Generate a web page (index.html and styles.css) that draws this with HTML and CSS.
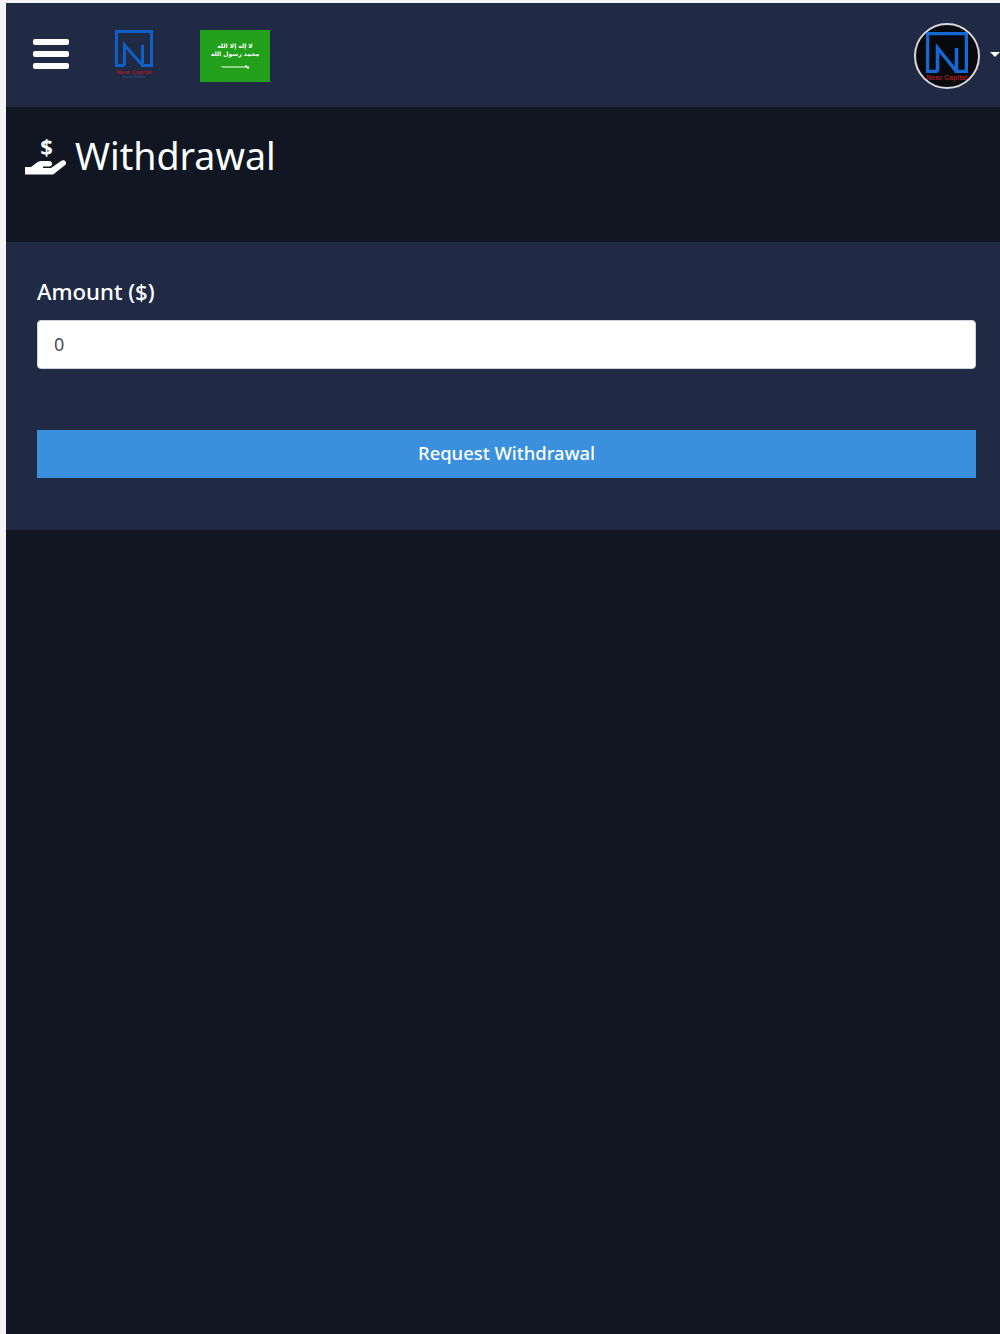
FILE: index.html
```html
<!DOCTYPE html>
<html lang="en">
<head>
<meta charset="utf-8">
<title>Withdrawal</title>
<link rel="stylesheet" href="styles.css">
</head>
<body>
<div class="app">
  <nav class="topbar">
    <button class="menu-btn" aria-label="Menu"><span></span><span></span><span></span></button>
    <div class="logo">
      <svg class="logo-mark" viewBox="0 0 38 37" width="38" height="37"><path d="M9.500 35.500H1.500V1.500H36.500V35.500H27.500V15M27.500 35.500L9.500 15V35.500" fill="none" stroke="#0f5fc6" stroke-width="3"/></svg>
      <div class="logo-text">Near Capital</div>
      <div class="logo-sub">Forex Broker</div>
    </div>
    <div class="flag">
      <div class="flag-text" lang="ar" dir="rtl">لا إله إلا الله محمد رسول الله</div>
      <svg class="flag-sword" viewBox="0 0 30 5" width="30" height="5"><path d="M0 1.500H25V0.500H27V1.500H29V3.500H27V2.500H3Z" fill="#fff"/></svg>
    </div>
    <div class="spacer"></div>
    <div class="avatar">
      <svg class="avatar-mark" viewBox="0 0 42 41" width="42" height="41"><path d="M11.500 39.500H1.500V1.500H40.500V39.500H30.500V16M30.500 39.500L11.500 16V39.500" fill="none" stroke="#1469d6" stroke-width="3.500"/></svg>
      <div class="avatar-text">Near Capital</div>
    </div>
    <span class="caret"></span>
  </nav>
  <header class="page-head">
    <div class="head-icon">
      <span class="head-dollar">$</span>
      <svg class="head-hand" viewBox="0 0 41 16" width="41" height="16"><path d="M0 8H6L12 3.500C13.500 2.500 15 2 17 2H24C26 2 27 3 27 4.700C27 6.400 26 7.500 24 7.500H18V9H26L36 2C37.500 1 39.500 1 40.500 2.500C41.500 4 41 5.500 39.500 6.500L30 14C29 15 28 15.500 26.500 15.500H0Z" fill="#fff"/></svg>
    </div>
    <h1 class="page-title">Withdrawal</h1>
  </header>
  <section class="card">
    <label class="field-label" for="amount">Amount ($)</label>
    <input class="field-input" id="amount" type="text" value="0">
    <button class="submit-btn">Request Withdrawal</button>
  </section>
</div>
</body>
</html>
```
FILE: styles.css
```css
* { box-sizing: border-box; }
html, body { margin: 0; height: 100%; }
body {
  background: #f4f4f4;
  font-family: "Noto Sans", "Open Sans", sans-serif;
  padding: 3px 0 0 6px;
  overflow: hidden;
}
.app {
  min-height: 1331px;
  background: #101722;
  color: #fff;
}
.topbar {
  height: 104px;
  background: #202a44;
  display: flex;
  align-items: flex-start;
  overflow: hidden;
  padding-left: 27px;
}
.menu-btn {
  width: 36px;
  margin-top: 36px;
  padding: 0;
  background: none;
  border: 0;
  display: flex;
  flex-direction: column;
  gap: 6px;
}
.menu-btn span {
  display: block;
  height: 6px;
  background: #fff;
  border-radius: 2px;
}
.logo {
  width: 38px;
  margin: 27px 0 0 46px;
  display: flex;
  flex-direction: column;
  align-items: center;
}
.logo-mark { display: block; }
.logo-text {
  font: 700 6px/6px "Liberation Sans", sans-serif;
  color: #9a1b26;
  white-space: nowrap;
  margin-top: 2px;
}
.logo-sub {
  font: 400 4px/4px "Liberation Sans", sans-serif;
  color: #35508f;
  white-space: nowrap;
}
.flag {
  width: 70px;
  height: 52px;
  margin: 27px 0 0 47px;
  background: #22a01c;
  display: flex;
  flex-direction: column;
  align-items: center;
  padding-top: 12px;
}
.flag-text {
  font: 700 6px/7.500px "DejaVu Sans", sans-serif;
  color: #fff;
  width: 52px;
  text-align: center;
}
.flag-sword { margin-top: 8px; display: block; }
.spacer { flex: 1; }
.avatar {
  width: 66px;
  height: 66px;
  margin-top: 20px;
  border-radius: 50%;
  background: #08090c;
  border: 2px solid #d7d9dd;
  display: flex;
  flex-direction: column;
  align-items: center;
  padding-top: 7px;
  overflow: hidden;
  flex: none;
}
.avatar-mark { display: block; flex: none; }
.avatar-text {
  font: 700 7px/8px "Liberation Sans", sans-serif;
  color: #a51a22;
  white-space: nowrap;
  flex: none;
  margin-top: 1px;
}
.caret {
  flex: none;
  width: 0;
  height: 0;
  margin: 49px 0 0 10px;
  border-left: 5px solid transparent;
  border-right: 5px solid transparent;
  border-top: 5px solid #fff;
}
.page-head {
  height: 135px;
  display: flex;
  align-items: flex-start;
  padding: 26px 0 0 19px;
}
.head-icon {
  flex: none;
  width: 41px;
  display: flex;
  flex-direction: column;
  align-items: center;
}
.head-dollar {
  font: 700 22px/26px "Noto Sans", sans-serif;
  color: #fff;
  margin-left: 2px;
}
.head-hand { display: block; margin-top: 0; }
.page-title {
  margin: 0 0 0 9px;
  font-size: 37.600px;
  line-height: 46px;
  font-weight: 400;
  color: #fff;
}
.card {
  height: 288px;
  background: #202a44;
  padding: 35px 24px 0 31px;
  display: flex;
  flex-direction: column;
}
.field-label {
  font-size: 22.200px;
  line-height: 30px;
  font-weight: 500;
}
.field-input {
  height: 49px;
  margin-top: 13px;
  padding: 0 16px 2px;
  background: #fff;
  border: 1px solid #ced4da;
  border-radius: 4px;
  color: #495057;
  font: 400 18px "Noto Sans", sans-serif;
}
.submit-btn {
  height: 48px;
  margin-top: 61px;
  padding: 0 0 4px;
  border: 0;
  background: #3a90dc;
  color: #fff;
  font: 500 18.400px "Noto Sans", sans-serif;
}
```
